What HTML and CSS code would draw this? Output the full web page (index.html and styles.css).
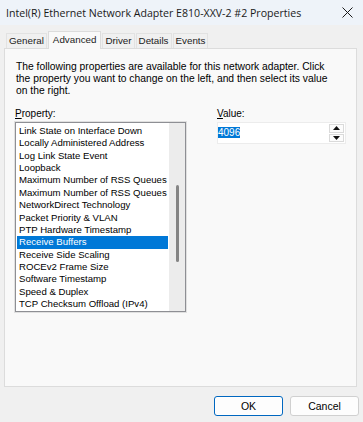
FILE: index.html
```html
<!DOCTYPE html>
<html lang="en">

<head>
    <meta charset="UTF-8">
    <title>Intel(R) Ethernet Network Adapter E810-XXV-2 #2 Properties</title>
    <link rel="stylesheet" href="styles.css">
</head>

<body>
    <div class="window">
        <!-- Title Bar -->
        <div class="title-bar">
            <span class="title">Intel(R) Ethernet Network Adapter E810-XXV-2 #2 Properties</span>
            <svg class="close-icon" width="11" height="11" viewBox="0 0 11 11">
                <path d="M0.5 0.5 L10.5 10.5 M10.5 0.5 L0.5 10.5" stroke="#1a1a1a" stroke-width="1" fill="none" />
            </svg>
        </div>

        <div class="client">
            <!-- Tabs -->
            <div class="tabs">
                <div class="tab">General</div>
                <div class="tab active">Advanced</div>
                <div class="tab">Driver</div>
                <div class="tab">Details</div>
                <div class="tab">Events</div>
            </div>

            <!-- Advanced Page -->
            <div class="panel">
                <p class="description">
                    The following properties are available for this network adapter. Click<br>
                    the property you want to change on the left, and then select its value<br>
                    on the right.
                </p>

                <div class="columns">
                    <div class="property-col">
                        <div class="label"><u>P</u>roperty:</div>
                        <div class="listbox">
                            <ul class="items">
                                <li>Link State on Interface Down</li>
                                <li>Locally Administered Address</li>
                                <li>Log Link State Event</li>
                                <li>Loopback</li>
                                <li>Maximum Number of RSS Queues</li>
                                <li>Maximum Number of RSS Queues</li>
                                <li>NetworkDirect Technology</li>
                                <li>Packet Priority &amp; VLAN</li>
                                <li>PTP Hardware Timestamp</li>
                                <li class="selected">Receive Buffers</li>
                                <li>Receive Side Scaling</li>
                                <li>ROCEv2 Frame Size</li>
                                <li>Software Timestamp</li>
                                <li>Speed &amp; Duplex</li>
                                <li>TCP Checksum Offload (IPv4)</li>
                            </ul>
                            <div class="scrollbar">
                                <div class="thumb"></div>
                            </div>
                        </div>
                    </div>

                    <div class="value-col">
                        <div class="label"><u>V</u>alue:</div>
                        <div class="spin-box">
                            <div class="spin-text"><span class="sel">4096</span></div>
                            <div class="spin-buttons">
                                <div class="spin-btn">
                                    <svg width="7" height="4" viewBox="0 0 7 4"><path d="M0 4 L3.5 0 L7 4 Z" fill="#111" /></svg>
                                </div>
                                <div class="spin-btn">
                                    <svg width="7" height="4" viewBox="0 0 7 4"><path d="M0 0 L3.5 4 L7 0 Z" fill="#111" /></svg>
                                </div>
                            </div>
                        </div>
                    </div>
                </div>
            </div>

            <!-- Dialog Buttons -->
            <div class="button-row">
                <button class="dlg-button default">OK</button>
                <button class="dlg-button">Cancel</button>
            </div>
        </div>
    </div>
</body>

</html>
```

FILE: styles.css
```css
/* Base Styles */
* {
    box-sizing: border-box;
}

body {
    margin: 0;
    padding: 0;
    background-color: #f0f0f0;
    font-family: 'Liberation Sans', Arial, sans-serif;
    font-size: 10px;
    color: #000;
}

.window {
    width: 363px;
    height: 422px;
    overflow: hidden;
    background-color: #f0f0f0;
}

/* Title Bar */
.title-bar {
    height: 25px;
    background-color: #eef3f9;
    display: flex;
    align-items: center;
    justify-content: space-between;
    padding: 0 10px 0 6px;
}

.title {
    font-family: 'Open Sans', 'Noto Sans', sans-serif;
    font-size: 10.6px;
    color: #1a1a1a;
    white-space: nowrap;
}

.close-icon {
    flex-shrink: 0;
}

/* Tabs */
.client {
    padding: 0 6px 0 4px;
}

.tabs {
    display: flex;
    align-items: flex-end;
    height: 23px;
    padding-left: 2px;
}

.tab {
    height: 15px;
    line-height: 14px;
    padding: 0 2px;
    margin-right: 1px;
    border: 1px solid #e2e2e2;
    border-bottom: none;
    background-color: #f0f0f0;
    font-size: 9.8px;
    color: #222;
}

.tab.active {
    height: 18px;
    line-height: 16px;
    margin: 0 1px 0 0;
    padding: 0 4px;
    background-color: #f9f9f9;
    border-color: #dcdcdc;
    position: relative;
    top: 1px;
}

/* Panel */
.panel {
    height: 339px;
    background-color: #f9f9f9;
    border: 1px solid #dcdcdc;
    padding: 12px 10px 0 11px;
}

.description {
    margin: 0;
    font-size: 10.3px;
    line-height: 12px;
    white-space: nowrap;
}

.columns {
    display: flex;
    margin-top: 11px;
}

.label {
    line-height: 12px;
    margin-bottom: 2px;
}

/* Property List */
.property-col {
    width: 172px;
    margin-left: -1px;
}

.listbox {
    display: flex;
    height: 190px;
    border: 1px solid #8e8f94;
    box-shadow: 0 0 0 1px #e0e0e0;
    background-color: #fff;
}

.items {
    list-style: none;
    margin: 0;
    padding: 2px 1px 0 1px;
    flex: 1;
}

.items li {
    height: 12.36px;
    line-height: 12.36px;
    padding-left: 2px;
    font-size: 9.6px;
    white-space: nowrap;
}

.items li.selected {
    background-color: #0078d7;
    color: #fff;
}

.scrollbar {
    width: 16px;
    background-color: #ececec;
    padding-top: 62px;
    display: flex;
    justify-content: center;
}

.thumb {
    width: 3px;
    height: 77px;
    background-color: #858585;
    border-radius: 2px;
}

/* Value Spin Box */
.value-col {
    margin-left: 31px;
}

.spin-box {
    display: flex;
    width: 129px;
    height: 22px;
    margin-top: 1px;
    background-color: #fff;
    border: 1px solid #ececec;
}

.spin-text {
    flex: 1;
    padding: 3px 0 0 0;
    line-height: 13px;
    font-size: 10px;
}

.spin-text .sel {
    background-color: #0078d7;
    color: #fff;
}

.spin-buttons {
    width: 17px;
    display: flex;
    flex-direction: column;
    padding: 1px;
    gap: 1px;
}

.spin-btn {
    flex: 1;
    display: flex;
    align-items: center;
    justify-content: center;
    border: 1px solid #dadada;
    background-color: #fcfcfc;
}

/* Dialog Buttons */
.button-row {
    display: flex;
    justify-content: flex-end;
    gap: 7px;
    margin-top: 9px;
    margin-right: -2px;
}

.dlg-button {
    width: 69px;
    height: 20px;
    font-family: 'Liberation Sans', Arial, sans-serif;
    font-size: 10.5px;
    color: #000;
    background-color: #fdfdfd;
    border: 1px solid #d0d0d0;
    border-radius: 3px;
    padding: 0;
}

.dlg-button.default {
    border: 1px solid #0067c0;
    box-shadow: inset 0 0 0 1px #ffffff;
}
```
